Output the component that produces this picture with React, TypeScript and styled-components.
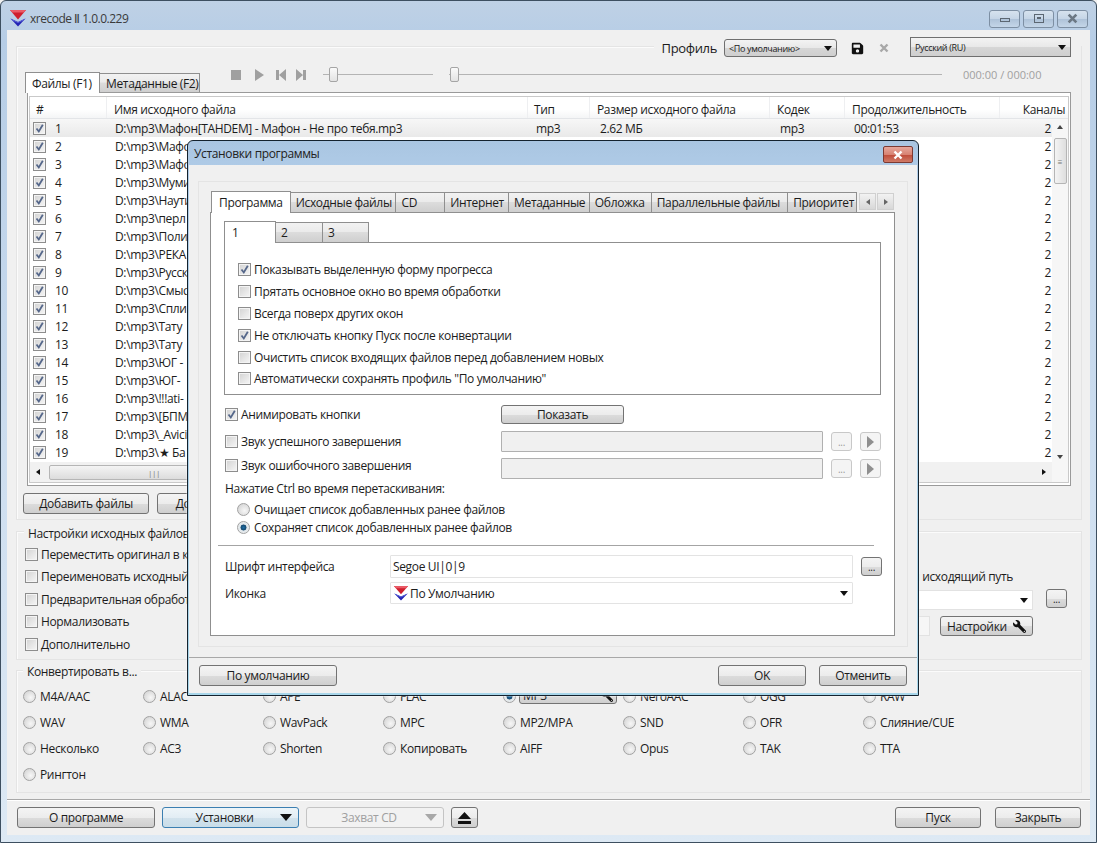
import React from 'react'
import styled, { createGlobalStyle, css } from 'styled-components'
import { FaSave, FaWrench } from 'react-icons/fa'

const GlobalStyle = createGlobalStyle`
    html, body {
        margin: 0;
        padding: 0;
        overflow: hidden;
        background: #f0f0f0;
    }
    * {
        box-sizing: border-box;
    }
    body {
        font-family: 'Open Sans', 'Noto Sans', 'Liberation Sans', sans-serif;
        font-size: 12px;
        letter-spacing: -0.35px;
        color: #1c1c1c;
    }
`

const Window = styled.div`
    position: relative;
    width: 1097px;
    height: 843px;
    display: flex;
    flex-direction: column;
    border: 1px solid #3d4f60;
    border-radius: 6px 6px 0 0;
    background: linear-gradient(180deg, #bfd1e5 0, #b6cde6 40px, #cfdff0 500px, #dde9f4 100%);
    overflow: hidden;
`

const TitleBar = styled.div`
    height: 29px;
    flex: none;
    display: flex;
    align-items: center;
    padding: 5px 8px 0 8px;
    gap: 3px;
    font-size: 12px;
    letter-spacing: -0.5px;
    color: #3a3a3a;
`

const TitleText = styled.span`
    flex: 1;
`

const WinControls = styled.div`
    display: flex;
    gap: 3px;
    margin-top: 1px;
`

const WinButton = styled.div`
    width: 31px;
    height: 18px;
    display: flex;
    align-items: center;
    justify-content: center;
    border: 1px solid #7d8fa3;
    border-radius: 3px;
    background: linear-gradient(180deg, #d6e2ee 0, #c5d5e6 50%, #aec2d8 51%, #c4d6e8 100%);
    color: #55606c;
`

const Client = styled.div`
    flex: none;
    width: 1083px;
    height: 805px;
    margin-left: 6px;
    padding: 16px 8px 0 9px;
    display: flex;
    flex-direction: column;
    background: #f0f0f0;
`

const Panel = styled.section`
    position: relative;
    border: 1px solid #e4e4e4;
    box-shadow: 1px 1px 0 #fbfbfb inset;
`

const TopPanel = styled(Panel)`
    height: 474px;
    display: flex;
    flex-direction: column;
`

const ProfileRow = styled.div`
    align-self: flex-end;
    display: flex;
    align-items: flex-end;
    height: 20px;
    margin-top: -10px;
    padding: 0 10px 0 8px;
    background: #f0f0f0;
`

const ProfileLabel = styled.span`
    font-size: 13px;
    line-height: 18px;
    margin-right: 7px;
`

const Combo = styled.div<{ $width: number; $square?: boolean }>`
    width: ${p => p.$width}px;
    height: ${p => (p.$square ? 20 : 18)}px;
    display: flex;
    align-items: center;
    justify-content: space-between;
    padding: 0 4px 0 4px;
    border: 1px solid #6f6f6f;
    border-radius: ${p => (p.$square ? 0 : 3)}px;
    background: linear-gradient(180deg, #f3f3f3 0, #e8e8e8 50%, #d6d6d6 51%, #cfcfcf 100%);
    font-size: 9px;
`

const Arrow = styled.i<{ $dir: 'up' | 'down' | 'left' | 'right'; $size?: number; $color?: string }>`
    display: block;
    flex: none;
    width: 0;
    height: 0;
    ${p => {
        const s = p.$size ?? 4
        const c = p.$color ?? '#111'
        const side = `${s}px solid transparent`
        const main = `${s + 1}px solid ${c}`
        if (p.$dir === 'down') return css`border-left: ${side}; border-right: ${side}; border-top: ${main};`
        if (p.$dir === 'up') return css`border-left: ${side}; border-right: ${side}; border-bottom: ${main};`
        if (p.$dir === 'left') return css`border-top: ${side}; border-bottom: ${side}; border-right: ${main};`
        return css`border-top: ${side}; border-bottom: ${side}; border-left: ${main};`
    }}
`

const ProfileIcons = styled.div`
    width: 73px;
    height: 18px;
    display: flex;
    align-items: center;
    padding-left: 14px;
    gap: 15px;
    color: #111;
`

const TabsRow = styled.div`
    display: flex;
    align-items: flex-end;
    height: 21px;
    margin: 14px 0 0 8px;
`

const Tab = styled.div<{ $active?: boolean; $width: number }>`
    width: ${p => p.$width}px;
    height: ${p => (p.$active ? 21 : 19)}px;
    display: flex;
    align-items: center;
    padding-left: 6px;
    white-space: nowrap;
    border: 1px solid #8f8f8f;
    border-left-width: ${p => (p.$active ? 1 : 0)}px;
    border-bottom: 0;
    background: ${p => (p.$active ? '#fff' : 'linear-gradient(180deg, #f2f2f2 0, #ebebeb 45%, #dcdcdc 50%, #cfcfcf 100%)')};
    position: relative;
    z-index: ${p => (p.$active ? 1 : 0)};
    margin-bottom: ${p => (p.$active ? -1 : 0)}px;
`

const Player = styled.div`
    display: flex;
    align-items: center;
    height: 19px;
    margin-left: 30px;
    margin-bottom: 8px;
    color: #9c9c9c;
`

const PlayerIcon = styled.svg<{ $gap: number }>`
    width: 12px;
    height: 12px;
    margin-right: ${p => p.$gap}px;
    fill: #a0a0a0;
`

const Slider = styled.div<{ $width: number; $gap: number }>`
    position: relative;
    width: ${p => p.$width}px;
    height: 1px;
    margin-right: ${p => p.$gap}px;
    background: #b4b4b4;
`

const Thumb = styled.div<{ $at: number }>`
    position: absolute;
    left: ${p => p.$at}px;
    top: -7px;
    width: 9px;
    height: 15px;
    border: 1px solid #a5a5a5;
    border-radius: 2px;
    background: linear-gradient(180deg, #fafafa, #e3e3e3);
`

const TimeText = styled.span`
    color: #a0a0a0;
    font-size: 11px;
    letter-spacing: 0;
    white-space: nowrap;
`

const TabPane = styled.div`
    height: 394px;
    margin: 0 10px;
    padding: 3px 1px;
    border: 1px solid #9a9a9a;
    background: #fff;
`

const ListFrame = styled.div`
    height: 387px;
    border: 1px solid #c9c9c9;
    display: flex;
    flex-direction: column;
`

const HeaderRow = styled.div`
    height: 22px;
    flex: none;
    display: grid;
    grid-template-columns: 77px 421px 62px 180px 75px 155px 1fr;
    align-items: center;
    background: linear-gradient(180deg, #fff 0, #fff 60%, #f4f5f6 100%);
    border-bottom: 1px solid #e3e5e8;
`

const HeaderCell = styled.div<{ $right?: boolean }>`
    padding: 3px 3px 0 7px;
    height: 100%;
    display: flex;
    align-items: center;
    white-space: nowrap;
    justify-content: ${p => (p.$right ? 'flex-end' : 'flex-start')};
    border-right: ${p => (p.$right ? 0 : 1)}px solid #eeeff1;
    &:first-child {
        padding-left: 6px;
    }
    &:nth-child(3) {
        padding-left: 6px;
    }
`

const FileArea = styled.div`
    flex: 1;
    display: flex;
    min-height: 0;
`

const FileColumn = styled.div`
    flex: 1;
    min-width: 0;
    display: flex;
    flex-direction: column;
`

const FileRows = styled.div`
    flex: 1;
    overflow: hidden;
`

const FileRow = styled.div<{ $selected?: boolean }>`
    height: 18px;
    display: grid;
    grid-template-columns: 77px 421px 62px 180px 75px 155px 1fr;
    align-items: center;
    white-space: nowrap;
    ${p => p.$selected && css`
        background: linear-gradient(180deg, #f7f7f7 0, #e9e9e9 100%);
    `}
`

const IndexCell = styled.div`
    display: flex;
    align-items: center;
    padding-left: 3px;
    gap: 9px;
`

const FileCell = styled.div<{ $right?: boolean; $pad?: number }>`
    padding: 0 1px 0 ${p => p.$pad ?? 8}px;
    overflow: hidden;
    text-align: ${p => (p.$right ? 'right' : 'left')};
`

const VScroll = styled.div`
    width: 16px;
    flex: none;
    display: flex;
    flex-direction: column;
    align-items: center;
    background: #f6f6f6;
    padding: 6px 0 0;
`

const VThumb = styled.div`
    width: 13px;
    height: 46px;
    margin-top: 9px;
    display: flex;
    align-items: center;
    justify-content: center;
    border: 1px solid #b5b5b5;
    border-radius: 2px;
    background: linear-gradient(90deg, #f4f4f4, #dedede);
    font-size: 8px;
    color: #777;
`

const VSpacer = styled.div`
    flex: 1;
`

const ScrollEnd = styled.div`
    height: 28px;
    display: flex;
    justify-content: center;
    padding-top: 1px;
`

const HScroll = styled.div`
    height: 20px;
    flex: none;
    display: flex;
    align-items: center;
    padding: 0 6px;
    background: #f1f1f1;
    justify-content: space-between;
`

const HThumb = styled.div`
    width: 210px;
    height: 15px;
    margin-left: 9px;
    margin-right: auto;
    display: flex;
    align-items: center;
    justify-content: center;
    border: 1px solid #b5b5b5;
    border-radius: 2px;
    background: linear-gradient(180deg, #f4f4f4, #dcdcdc);
    font-size: 8px;
    color: #777;
`

const ButtonRow = styled.div`
    display: flex;
    gap: 8px;
    margin: 7px 0 0 6px;
`

const Button = styled.button<{ $width: number; $height?: number; $focused?: boolean; $disabled?: boolean; $spread?: boolean }>`
    width: ${p => p.$width}px;
    height: ${p => p.$height ?? 21}px;
    flex: none;
    display: flex;
    align-items: center;
    justify-content: ${p => (p.$spread ? 'space-between' : 'center')};
    padding: 0 ${p => (p.$spread ? 6 : 0)}px;
    font: inherit;
    letter-spacing: inherit;
    color: ${p => (p.$disabled ? '#a0a0a0' : '#1c1c1c')};
    border: 1px solid ${p => (p.$focused ? '#3c7fb1' : p.$disabled ? '#c4c4c4' : '#737373')};
    border-radius: 3px;
    background: ${p =>
        p.$disabled
            ? '#f2f2f2'
            : p.$focused
              ? 'linear-gradient(180deg, #eef5f9 0, #e2edf4 50%, #d2e2ec 51%, #c9dde9 100%)'
              : 'linear-gradient(180deg, #f4f4f4 0, #ececec 50%, #dcdcdc 51%, #cfcfcf 100%)'};
`

const DotsButton = styled(Button)`
    align-items: flex-end;
    padding-bottom: 3px;
    font-size: 10px;
    line-height: 10px;
`

const SourcePanel = styled(Panel)`
    height: 129px;
    margin-top: 11px;
    padding: 11px 14px 0 7px;
    display: flex;
    justify-content: space-between;
`

const Legend = styled.span`
    position: absolute;
    top: -8px;
    left: 6px;
    padding: 0 4px;
    background: #f0f0f0;
`

const SourceLegend = styled(Legend)`
    top: -7px;
    left: 7px;
`

const CheckList = styled.div`
    display: flex;
    flex-direction: column;
    padding-left: 1px;
`

const CheckRow = styled.label<{ $height: number }>`
    display: flex;
    align-items: center;
    gap: 3px;
    height: ${p => p.$height}px;
    white-space: nowrap;
`

const CheckBox = styled.span`
    width: 13px;
    height: 13px;
    flex: none;
    display: block;
    border: 1px solid #8d8d8d;
    background: linear-gradient(135deg, #d2d2d2 0, #e8e8e8 60%, #f6f6f6 100%);
    box-shadow: inset 0 0 0 1px #f4f4f4;
`

const CheckMark = styled.svg`
    display: block;
    width: 11px;
    height: 11px;
    fill: none;
    stroke: #55678a;
    stroke-width: 1.8;
`

const RightOptions = styled.div`
    width: 360px;
    padding-top: 25px;
    display: flex;
    flex-direction: column;
    align-items: flex-end;
`

const OutputCaption = styled.div`
    height: 16px;
    padding-right: 54px;
    white-space: nowrap;
`

const OutputRow = styled.div`
    display: flex;
    align-items: flex-start;
    gap: 13px;
    margin-top: 5px;
`

const OutputCombo = styled.div`
    width: 200px;
    height: 20px;
    margin-top: 1px;
    display: flex;
    align-items: center;
    justify-content: flex-end;
    padding-right: 4px;
    background: #fff;
    border: 1px solid #e2e2e2;
`

const SettingsRow = styled.div`
    display: flex;
    align-items: center;
    gap: 10px;
    margin-top: 6px;
    padding-right: 34px;
`

const SmallInput = styled.div`
    width: 60px;
    height: 20px;
    background: #f6f6f6;
    border: 1px solid #e2e2e2;
`

const MirroredWrench = styled(FaWrench)`
    transform: scaleX(-1);
    color: #111;
`

const ConvertPanel = styled(Panel)`
    height: 123px;
    margin-top: 10px;
    padding: 12px 6px 0;
    display: grid;
    grid-template-columns: repeat(8, 120px);
    grid-auto-rows: 26px;
`

const RadioRow = styled.label<{ $height?: number }>`
    display: flex;
    align-items: center;
    gap: 4px;
    white-space: nowrap;
    ${p => p.$height && css`height: ${p.$height}px;`}
`

const RadioDot = styled.span<{ $on?: boolean }>`
    width: 13px;
    height: 13px;
    flex: none;
    display: block;
    border-radius: 50%;
    border: 1px solid #a2a2a2;
    background: ${p =>
        p.$on
            ? 'radial-gradient(circle at 50% 50%, #1f6ea5 0, #15486f 35%, #dfe6ea 42%, #f2f2f2 100%)'
            : 'radial-gradient(circle at 60% 60%, #f7f7f7 0, #dadada 70%, #c9c9c9 100%)'};
`

const FormatButton = styled(Button)`
    height: 17px;
    margin: -1px 0 0 -1px;
    font-size: 12px;
    padding: 0 3px;
`

const Footer = styled.footer`
    margin: 6px -8px 0 -9px;
    padding: 7px 9px 0 10px;
    border-top: 1px solid #a8a8a8;
    box-shadow: inset 0 1px 0 #fff;
    display: flex;
    align-items: center;
    gap: 7px;
`

const FooterSpacer = styled.div`
    flex: 1;
`

const FooterEnd = styled.div`
    display: flex;
    gap: 14px;
`

const Dialog = styled.div`
    position: absolute;
    left: 186px;
    top: 139px;
    width: 732px;
    height: 556px;
    display: flex;
    flex-direction: column;
    border: 1px solid #14222e;
    border-radius: 6px 6px 0 0;
    padding: 0 1px 2px 1px;
    background: linear-gradient(180deg, #a9c5e1 0, #b0cce8 30px, #a8d6ea 100%);
    box-shadow: 0 0 0 1px rgba(255, 255, 255, 0.3);
`

const DialogTitle = styled.div`
    height: 24px;
    flex: none;
    display: flex;
    align-items: center;
    justify-content: space-between;
    padding: 0 4px 0 5px;
    color: #222;
`

const DialogClose = styled.div`
    width: 30px;
    height: 17px;
    margin-top: 3px;
    display: flex;
    align-items: center;
    justify-content: center;
    border: 1px solid #7c3a33;
    border-radius: 2px;
    background: linear-gradient(180deg, #e6a79c 0, #d88373 50%, #bf4a38 51%, #cf7a67 100%);
`

const DialogBody = styled.div`
    flex: 1;
    display: flex;
    flex-direction: column;
    background: #f0f0f0;
`

const OuterBox = styled.div`
    height: 466px;
    margin: 16px 9px 0 9px;
    padding: 8px 13px 0 11px;
    border: 1px solid #e4e4e4;
`

const DialogTabs = styled.div`
    display: flex;
    align-items: flex-end;
    height: 22px;
    margin-left: 1px;
`

const SubTabs = styled.div`
    display: flex;
    align-items: flex-end;
    height: 22px;
`

const DialogTab = styled.div<{ $active?: boolean; $width: number }>`
    width: ${p => p.$width}px;
    height: ${p => (p.$active ? 22 : 20)}px;
    display: flex;
    align-items: center;
    padding-left: ${p => (p.$active ? 7 : 5)}px;
    white-space: nowrap;
    border: 1px solid #8f8f8f;
    border-left-width: ${p => (p.$active ? 1 : 0)}px;
    border-bottom: 0;
    position: relative;
    z-index: ${p => (p.$active ? 1 : 0)};
    margin-bottom: ${p => (p.$active ? -1 : 0)}px;
    background: ${p => (p.$active ? '#fff' : 'linear-gradient(180deg, #f2f2f2 0, #ebebeb 45%, #dcdcdc 50%, #cfcfcf 100%)')};
`

const TabScroller = styled.div`
    display: flex;
    gap: 1px;
    margin: 0 0 2px 2px;
`

const TabScrollButton = styled.div`
    width: 17px;
    height: 17px;
    display: flex;
    align-items: center;
    justify-content: center;
    border: 1px solid #d0d0d0;
    background: linear-gradient(180deg, #f2f2f2, #d8d8d8);
`

const DialogPane = styled.div`
    width: 685px;
    height: 424px;
    padding: 7px 13px 0 13px;
    border: 1px solid #8f8f8f;
    background: #fff;
`

const SubBox = styled.div`
    width: 657px;
    height: 153px;
    padding: 16px 0 0 13px;
    border: 1px solid #8f8f8f;
    background: #fff;
`

const FormRow = styled.div<{ $top: number; $height: number }>`
    display: flex;
    align-items: center;
    margin-top: ${p => p.$top}px;
    height: ${p => p.$height}px;
`

const RowLabel = styled.div<{ $width: number; $lift?: number }>`
    width: ${p => p.$width}px;
    flex: none;
    padding-left: 1px;
    margin-bottom: ${p => p.$lift ?? 0}px;
    white-space: nowrap;
`

const Field = styled.div<{ $width: number; $disabled?: boolean }>`
    width: ${p => p.$width}px;
    height: 100%;
    flex: none;
    display: flex;
    align-items: center;
    padding: 0 4px 0 2px;
    gap: 1px;
    border: 1px solid ${p => (p.$disabled ? '#b0b0b0' : '#e3e3e3')};
    border-radius: 1px;
    background: ${p => (p.$disabled ? '#f0f0f0' : '#fff')};
`

const FieldText = styled.span`
    flex: 1;
`

const FieldAction = styled.div`
    display: flex;
    gap: 8px;
    margin-left: 8px;
    align-items: center;
`

const GhostButton = styled.div`
    width: 21px;
    height: 19px;
    display: flex;
    align-items: center;
    justify-content: center;
    border: 1px solid #c8c8c8;
    border-radius: 3px;
    background: #f4f4f4;
    color: #9a9a9a;
    font-size: 10px;
    line-height: 14px;
`

const Caption = styled.div`
    height: 16px;
    margin-top: 1px;
    padding-left: 1px;
`

const RadioGroup = styled.div`
    margin: 4px 0 0 13px;
`

const Divider = styled.div`
    height: 1px;
    margin: 9px 7px 0 -6px;
    background: #a4a4a4;
`

const DialogFooter = styled.div`
    margin-top: 10px;
    padding: 7px 10px 0 10px;
    border-top: 1px solid #a8a8a8;
    display: flex;
    gap: 13px;
`

const Logo = ({ size = 18 }: { size?: number }) => (
    <svg width={size} height={size} viewBox="0 0 18 18">
        <path d="M1.500 9.500 9 13l7.500-3.500L9 17.500z" fill="#2323b4" />
        <path d="M1.500 9.500 9 13l7.500-3.500-1.500 1.700L9 14 3 11.200z" fill="#5a62d8" />
        <path d="M1 1h16L9 10.500z" fill="#cf1f2e" />
        <path d="M1 1h16l-2.300 2.600H3.300z" fill="#ea5a66" />
    </svg>
)

const Check = ({ on }: { on?: boolean }) => (
    <CheckBox>
        {on && (
            <CheckMark viewBox="0 0 11 11">
                <path d="M2.500 5.500 4.800 8.500 8.800 1.800" />
            </CheckMark>
        )}
    </CheckBox>
)

const CloseGlyph = ({ color, size = 10 }: { color: string; size?: number }) => (
    <svg width={size} height={size} viewBox="0 0 10 10">
        <path d="M1.500 1.500 8.500 8.500M8.500 1.500 1.500 8.500" stroke={color} strokeWidth="2.400" fill="none" />
    </svg>
)

const files = [
    'Мафон[TAHDEM] - Мафон - Не про тебя.mp3',
    'Мафон',
    'Мафон',
    'Мумий',
    'Наутилус',
    'перл',
    'Полина',
    'РЕКА',
    'Русский',
    'Смысловые',
    'Сплин',
    'Тату',
    'Тату',
    'ЮГ -',
    'ЮГ-',
    '!!!ati-',
    '[БПМ',
    '_Avicii',
    '★ Ба',
]

const sourceOptions = [
    'Переместить оригинал в корзину',
    'Переименовать исходный файл',
    'Предварительная обработка',
    'Нормализовать',
    'Дополнительно',
]

const formats = [
    'M4A/AAC', 'ALAC', 'APE', 'FLAC', 'MP3', 'NeroAAC', 'OGG', 'RAW',
    'WAV', 'WMA', 'WavPack', 'MPC', 'MP2/MPA', 'SND', 'OFR', 'Слияние/CUE',
    'Несколько', 'AC3', 'Shorten', 'Копировать', 'AIFF', 'Opus', 'TAK', 'TTA',
    'Рингтон',
]

const dialogTabs: [string, number][] = [
    ['Исходные файлы', 106],
    ['CD', 49],
    ['Интернет', 64],
    ['Метаданные', 81],
    ['Обложка', 62],
    ['Параллельные файлы', 137],
    ['Приоритет', 69],
]

const programOptions: [string, boolean][] = [
    ['Показывать выделенную форму прогресса', true],
    ['Прятать основное окно во время обработки', false],
    ['Всегда поверх других окон', false],
    ['Не отключать кнопку Пуск после конвертации', true],
    ['Очистить список входящих файлов перед добавлением новых', false],
    ['Автоматически сохранять профиль "По умолчанию"', false],
]

function SettingsDialog() {
    return (
        <Dialog>
            <DialogTitle>
                Установки программы
                <DialogClose>
                    <CloseGlyph color="#fff" />
                </DialogClose>
            </DialogTitle>
            <DialogBody>
                <OuterBox>
                    <DialogTabs>
                        <DialogTab $active $width={80}>Программа</DialogTab>
                        {dialogTabs.map(([name, width]) => (
                            <DialogTab key={name} $width={width}>{name}</DialogTab>
                        ))}
                        <TabScroller>
                            <TabScrollButton><Arrow $dir="left" $size={3} $color="#666" /></TabScrollButton>
                            <TabScrollButton><Arrow $dir="right" $size={3} $color="#666" /></TabScrollButton>
                        </TabScroller>
                    </DialogTabs>
                    <DialogPane>
                        <SubTabs>
                            <DialogTab $active $width={52}>1</DialogTab>
                            <DialogTab $width={47}>2</DialogTab>
                            <DialogTab $width={46}>3</DialogTab>
                        </SubTabs>
                        <SubBox>
                            {programOptions.map(([text, on]) => (
                                <CheckRow key={text} $height={21.8}>
                                    <Check on={on} />
                                    {text}
                                </CheckRow>
                            ))}
                        </SubBox>
                        <FormRow $top={10} $height={19}>
                            <RowLabel $width={277}>
                                <CheckRow $height={19}>
                                    <Check on />
                                    Анимировать кнопки
                                </CheckRow>
                            </RowLabel>
                            <Button $width={123} $height={19}>Показать</Button>
                        </FormRow>
                        <FormRow $top={7} $height={21}>
                            <RowLabel $width={277}>
                                <CheckRow $height={21}>
                                    <Check />
                                    Звук успешного завершения
                                </CheckRow>
                            </RowLabel>
                            <Field $width={322} $disabled />
                            <FieldAction>
                                <GhostButton>...</GhostButton>
                                <GhostButton><Arrow $dir="right" $size={6} $color="#8f8f8f" /></GhostButton>
                            </FieldAction>
                        </FormRow>
                        <FormRow $top={6} $height={21}>
                            <RowLabel $width={277} $lift={6}>
                                <CheckRow $height={21}>
                                    <Check />
                                    Звук ошибочного завершения
                                </CheckRow>
                            </RowLabel>
                            <Field $width={322} $disabled />
                            <FieldAction>
                                <GhostButton>...</GhostButton>
                                <GhostButton><Arrow $dir="right" $size={6} $color="#8f8f8f" /></GhostButton>
                            </FieldAction>
                        </FormRow>
                        <Caption>Нажатие Ctrl во время перетаскивания:</Caption>
                        <RadioGroup>
                            <RadioRow $height={18}><RadioDot />Очищает список добавленных ранее файлов</RadioRow>
                            <RadioRow $height={18}><RadioDot $on />Сохраняет список добавленных ранее файлов</RadioRow>
                        </RadioGroup>
                        <Divider />
                        <FormRow $top={9} $height={23}>
                            <RowLabel $width={166}>Шрифт интерфейса</RowLabel>
                            <Field $width={463}><FieldText>Segoe UI|0|9</FieldText></Field>
                            <FieldAction>
                                <DotsButton $width={21} $height={19}>...</DotsButton>
                            </FieldAction>
                        </FormRow>
                        <FormRow $top={4} $height={22}>
                            <RowLabel $width={166}>Иконка</RowLabel>
                            <Field $width={463}>
                                <Logo size={16} />
                                <FieldText>По Умолчанию</FieldText>
                                <Arrow $dir="down" />
                            </Field>
                        </FormRow>
                    </DialogPane>
                </OuterBox>
                <DialogFooter>
                    <Button $width={138}>По умолчанию</Button>
                    <FooterSpacer />
                    <Button $width={88}>OK</Button>
                    <Button $width={88}>Отменить</Button>
                </DialogFooter>
            </DialogBody>
        </Dialog>
    )
}

function ConvertOptions() {
    return (
        <ConvertPanel>
            <Legend>Конвертировать в...</Legend>
            {formats.map(name => (
                <RadioRow key={name}>
                    <RadioDot $on={name === 'MP3'} />
                    {name === 'MP3' ? (
                        <FormatButton $width={98} $spread>MP3 <MirroredWrench size={12} /></FormatButton>
                    ) : (
                        name
                    )}
                </RadioRow>
            ))}
        </ConvertPanel>
    )
}

export default function App() {
    return (
        <>
            <GlobalStyle />
            <Window>
                <TitleBar>
                    <Logo />
                    <TitleText>xrecode Ⅱ 1.0.0.229</TitleText>
                    <WinControls>
                        <WinButton><svg width="10" height="6"><rect x="0.500" y="2.500" width="9" height="3" fill="none" stroke="#5c6772" /></svg></WinButton>
                        <WinButton><svg width="10" height="9"><rect x="0.500" y="0.500" width="9" height="8" fill="none" stroke="#5c6772" /><rect x="3" y="3" width="4" height="2" fill="#5c6772" /></svg></WinButton>
                        <WinButton><CloseGlyph color="#6c7884" size={11} /></WinButton>
                    </WinControls>
                </TitleBar>
                <Client>
                    <TopPanel>
                        <ProfileRow>
                            <ProfileLabel>Профиль</ProfileLabel>
                            <Combo $width={113}>
                                &lt;По умолчанию&gt;
                                <Arrow $dir="down" />
                            </Combo>
                            <ProfileIcons>
                                <FaSave size={13} />
                                <CloseGlyph color="#a8a8a8" />
                            </ProfileIcons>
                            <Combo $width={161} $square>
                                Русский (RU)
                                <Arrow $dir="down" />
                            </Combo>
                        </ProfileRow>
                        <TabsRow>
                            <Tab $active $width={75}>Файлы (F1)</Tab>
                            <Tab $width={100}>Метаданные (F2)</Tab>
                            <Player>
                                <PlayerIcon $gap={11} viewBox="0 0 12 12"><rect x="1" y="1" width="10" height="10" /></PlayerIcon>
                                <PlayerIcon $gap={10} viewBox="0 0 12 12"><path d="M2 0 11 6 2 12z" /></PlayerIcon>
                                <PlayerIcon $gap={8} viewBox="0 0 12 12"><path d="M1 1h3v10H1zM11 0v12L4 6z" /></PlayerIcon>
                                <PlayerIcon $gap={16} viewBox="0 0 12 12"><path d="M8 1h3v10H8zM1 0v12l7-6z" /></PlayerIcon>
                                <Slider $width={110} $gap={16}><Thumb $at={6} /></Slider>
                                <Slider $width={493} $gap={21}><Thumb $at={1} /></Slider>
                                <TimeText>000:00 / 000:00</TimeText>
                            </Player>
                        </TabsRow>
                        <TabPane>
                            <ListFrame>
                                <HeaderRow>
                                    <HeaderCell>#</HeaderCell>
                                    <HeaderCell>Имя исходного файла</HeaderCell>
                                    <HeaderCell>Тип</HeaderCell>
                                    <HeaderCell>Размер исходного файла</HeaderCell>
                                    <HeaderCell>Кодек</HeaderCell>
                                    <HeaderCell>Продолжительность</HeaderCell>
                                    <HeaderCell $right>Каналы</HeaderCell>
                                </HeaderRow>
                                <FileArea>
                                    <FileColumn>
                                        <FileRows>
                                            {files.map((name, i) => (
                                                <FileRow key={i} $selected={i === 0}>
                                                    <IndexCell>
                                                        <Check on />
                                                        {i + 1}
                                                    </IndexCell>
                                                    <FileCell>D:\mp3\{name}</FileCell>
                                                    <FileCell>{i === 0 && 'mp3'}</FileCell>
                                                    <FileCell $pad={10}>{i === 0 && '2.62 МБ'}</FileCell>
                                                    <FileCell $pad={10}>{i === 0 && 'mp3'}</FileCell>
                                                    <FileCell $pad={9}>{i === 0 && '00:01:53'}</FileCell>
                                                    <FileCell $right>2</FileCell>
                                                </FileRow>
                                            ))}
                                        </FileRows>
                                        <HScroll>
                                            <Arrow $dir="left" $size={3} />
                                            <HThumb>|||</HThumb>
                                            <Arrow $dir="right" $size={3} />
                                        </HScroll>
                                    </FileColumn>
                                    <VScroll>
                                        <Arrow $dir="up" $size={3} $color="#444" />
                                        <VThumb>≡</VThumb>
                                        <VSpacer />
                                        <ScrollEnd><Arrow $dir="down" $size={3} $color="#444" /></ScrollEnd>
                                    </VScroll>
                                </FileArea>
                            </ListFrame>
                        </TabPane>
                        <ButtonRow>
                            <Button $width={126}>Добавить файлы</Button>
                            <Button $width={126}>Добавить папку</Button>
                        </ButtonRow>
                    </TopPanel>
                    <SourcePanel>
                        <SourceLegend>Настройки исходных файлов</SourceLegend>
                        <CheckList>
                            {sourceOptions.map(text => (
                                <CheckRow key={text} $height={22.5}>
                                    <Check />
                                    {text}
                                </CheckRow>
                            ))}
                        </CheckList>
                        <RightOptions>
                            <OutputCaption>Другой исходящий путь</OutputCaption>
                            <OutputRow>
                                <OutputCombo><Arrow $dir="down" /></OutputCombo>
                                <DotsButton $width={21} $height={19}>...</DotsButton>
                            </OutputRow>
                            <SettingsRow>
                                <SmallInput />
                                <Button $width={93} $height={20} $spread>Настройки <MirroredWrench size={13} /></Button>
                            </SettingsRow>
                        </RightOptions>
                    </SourcePanel>
                    <ConvertOptions />
                    <Footer>
                        <Button $width={138}>О программе</Button>
                        <Button $width={137} $focused $spread>
                            <FooterSpacer />
                            Установки
                            <FooterSpacer />
                            <Arrow $dir="down" $size={6} />
                        </Button>
                        <Button $width={138} $disabled $spread>
                            <FooterSpacer />
                            Захват CD
                            <FooterSpacer />
                            <Arrow $dir="down" $size={6} $color="#a8a8a8" />
                        </Button>
                        <Button $width={27}>
                            <svg width="15" height="12" viewBox="0 0 15 12"><path d="M7.500 0 14 7H1zM1 9h13v3H1z" fill="#111" /></svg>
                        </Button>
                        <FooterSpacer />
                        <FooterEnd>
                            <Button $width={86}>Пуск</Button>
                            <Button $width={86}>Закрыть</Button>
                        </FooterEnd>
                    </Footer>
                </Client>
                <SettingsDialog />
            </Window>
        </>
    )
}
